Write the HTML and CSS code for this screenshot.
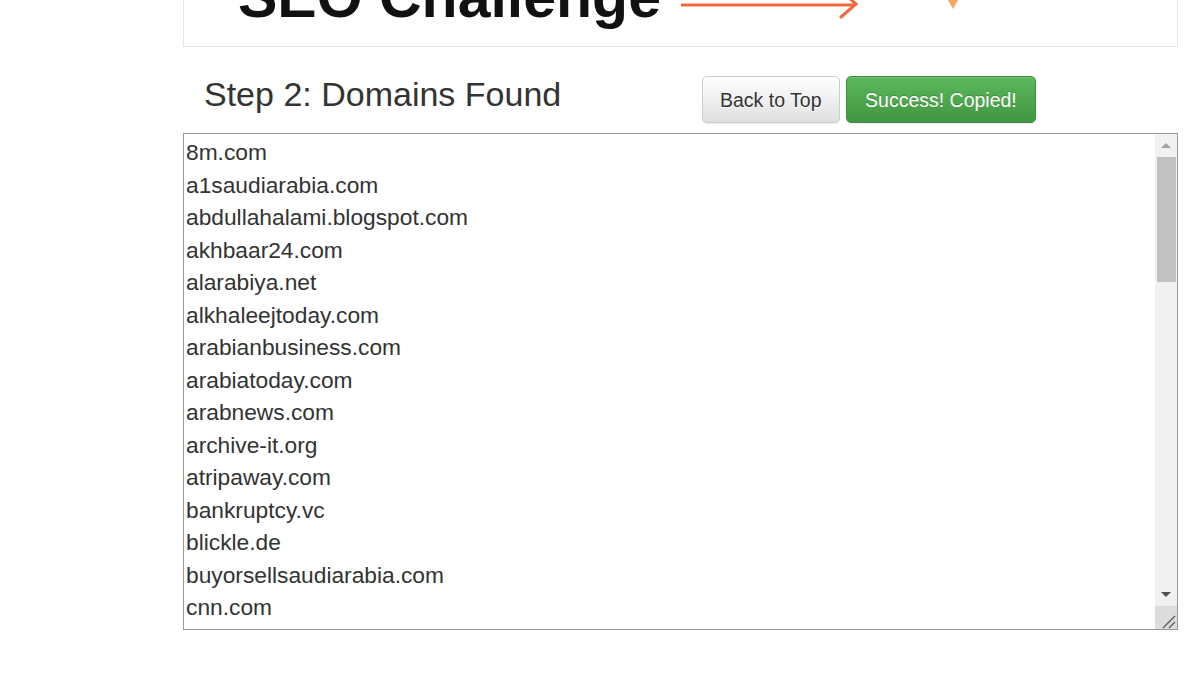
FILE: index.html
```html
<!DOCTYPE html>
<html lang="en">
<head>
  <meta charset="UTF-8">
  <meta name="viewport" content="width=device-width, initial-scale=1.0">
  <title>SEO Challenge - Domains Found</title>
  <link rel="stylesheet" href="styles.css">
</head>
<body>
  <div class="page">
    <!-- banner image, scrolled mostly out of view -->
    <div class="banner">
      <div class="banner-inner">
        <span class="banner-title">SEO Challenge</span>
        <svg class="banner-arrow" width="180" height="20" viewBox="0 0 180 20">
          <path d="M0 5 H174" stroke="#f26a3b" stroke-width="3" fill="none"/>
          <path d="M160 -9 L175 4 L160 17" stroke="#f26a3b" stroke-width="3" fill="none" stroke-linecap="round"/>
        </svg>
        <svg class="banner-mark" width="10" height="10" viewBox="0 0 10 10">
          <path d="M0 0 H10 L5 9 Z" fill="#f8a55e"/>
        </svg>
      </div>
    </div>

    <div class="head">
      <h2 class="head-title">Step 2: Domains Found</h2>
      <div class="head-buttons">
        <button class="btn btn-default">Back to Top</button>
        <button class="btn btn-success">Success! Copied!</button>
      </div>
    </div>

    <div class="domains-box">
      <textarea class="domains" spellcheck="false">8m.com
a1saudiarabia.com
abdullahalami.blogspot.com
akhbaar24.com
alarabiya.net
alkhaleejtoday.com
arabianbusiness.com
arabiatoday.com
arabnews.com
archive-it.org
atripaway.com
bankruptcy.vc
blickle.de
buyorsellsaudiarabia.com
cnn.com
constructionweekonline.com
dailymail.co.uk
dubizzle.com
emaratalyoum.com
english.alarabiya.net
expatwoman.com
facebook.com
forbes.com
gulfbusiness.com
gulfnews.com
haraj.com.sa
hindustantimes.com
instagram.com
khaleejtimes.com
linkedin.com
mapsofworld.com
meed.com
middleeasteye.net
mubasher.info
okaz.com.sa
opensooq.com
reuters.com
riyadhconnect.com
sabq.org
saudigazette.com.sa
sauditourism.sa
sayidaty.net
spa.gov.sa
theguardian.com
thenational.ae
tripadvisor.com
twitter.com
vision2030.gov.sa
wikipedia.org
wsj.com
youtube.com
zawya.com</textarea>
      <!-- scrollbar drawn by hand, the browser hides its own -->
      <div class="scrollbar">
        <div class="sb-button">
          <svg width="22" height="22" viewBox="0 0 22 22"><path d="M6 14 H16 L11 9 Z" fill="#a3a3a3"/></svg>
        </div>
        <div class="sb-track">
          <div class="sb-thumb"></div>
        </div>
        <div class="sb-button">
          <svg width="22" height="22" viewBox="0 0 22 22"><path d="M6 8 H16 L11 13 Z" fill="#505050"/></svg>
        </div>
        <div class="sb-corner">
          <svg width="22" height="23" viewBox="0 0 22 23"><path d="M20 10 L8 22 M20 16 L14 22" stroke="#5a5a5a" stroke-width="1.3"/></svg>
        </div>
      </div>
    </div>
  </div>
</body>
</html>
```

FILE: styles.css
```css
/* plain white page, bootstrap-ish type */
body {
  margin: 0;
  background-color: #fff;
  color: #333;
  font-family: "Liberation Sans", Arial, sans-serif;
}

.page {
  width: 995px;
  margin-left: 183px;
}

/* Banner picture at the top */
.banner {
  height: 46px;
  border: 1px solid #e6e6e6;
  border-top: none;
  overflow: hidden;
}

.banner-inner {
  display: flex;
  align-items: flex-start;
  margin-top: -32px;
  padding-left: 54px;
}

.banner-title {
  font-size: 59px;
  font-weight: bold;
  line-height: 1;
  color: #111;
  white-space: nowrap;
}

.banner-arrow {
  margin-top: 32px;
  margin-left: 20px;
  overflow: visible;
}

.banner-mark {
  margin-top: 32px;
  margin-left: 87px;
}

/* Heading row with buttons */
.head {
  display: flex;
  align-items: flex-start;
  height: 76px;
  padding-top: 29px;
  box-sizing: border-box;
}

.head-title {
  width: 519px;
  margin: 0;
  padding-left: 21px;
  box-sizing: border-box;
  font-size: 34px;
  font-weight: normal;
  line-height: 1.1;
  color: #333;
}

.head-buttons {
  display: flex;
  gap: 6px;
}

.btn {
  height: 47px;
  padding: 0 17px;
  border: 1px solid transparent;
  border-radius: 5px;
  font-family: "Liberation Sans", Arial, sans-serif;
  font-size: 19.5px;
  line-height: 28px;
  cursor: pointer;
}

.btn-default {
  color: #333;
  background-image: linear-gradient(to bottom, #fff 0%, #e0e0e0 100%);
  border-color: #ccc;
  text-shadow: 0 1px 0 #fff;
  box-shadow: inset 0 1px 0 rgba(255, 255, 255, 0.15), 0 1px 1px rgba(0, 0, 0, 0.075);
}

.btn-success {
  padding: 0 18.5px;
  color: #fff;
  background-image: linear-gradient(to bottom, #5cb85c 0%, #419641 100%);
  border-color: #3e8f3e;
  text-shadow: 0 -1px 0 rgba(0, 0, 0, 0.2);
  box-shadow: inset 0 1px 0 rgba(255, 255, 255, 0.15), 0 1px 1px rgba(0, 0, 0, 0.075);
}

/* Domains list with its scrollbar */
.domains-box {
  display: flex;
  height: 497px;
  margin-top: 10px;
  border: 1px solid #9a9a9a;
  box-sizing: border-box;
}

.domains {
  flex: 1;
  margin: 0;
  padding: 2px;
  border: none;
  font-family: "Liberation Sans", Arial, sans-serif;
  font-size: 22.75px;
  line-height: 32.5px;
  color: #333;
  resize: none;
  outline: none;
  overflow: hidden;
}

.scrollbar {
  display: flex;
  flex-direction: column;
  width: 22px;
  background-color: #f1f1f1;
}

.sb-button {
  height: 22px;
}

.sb-button svg,
.sb-corner svg {
  display: block;
}

.sb-track {
  flex: 1;
  padding-top: 1px;
}

.sb-thumb {
  height: 125px;
  margin: 0 1px 0 2px;
  background-color: #c1c1c1;
}

.sb-corner {
  height: 23px;
  background-color: #dcdcdc;
}
```
